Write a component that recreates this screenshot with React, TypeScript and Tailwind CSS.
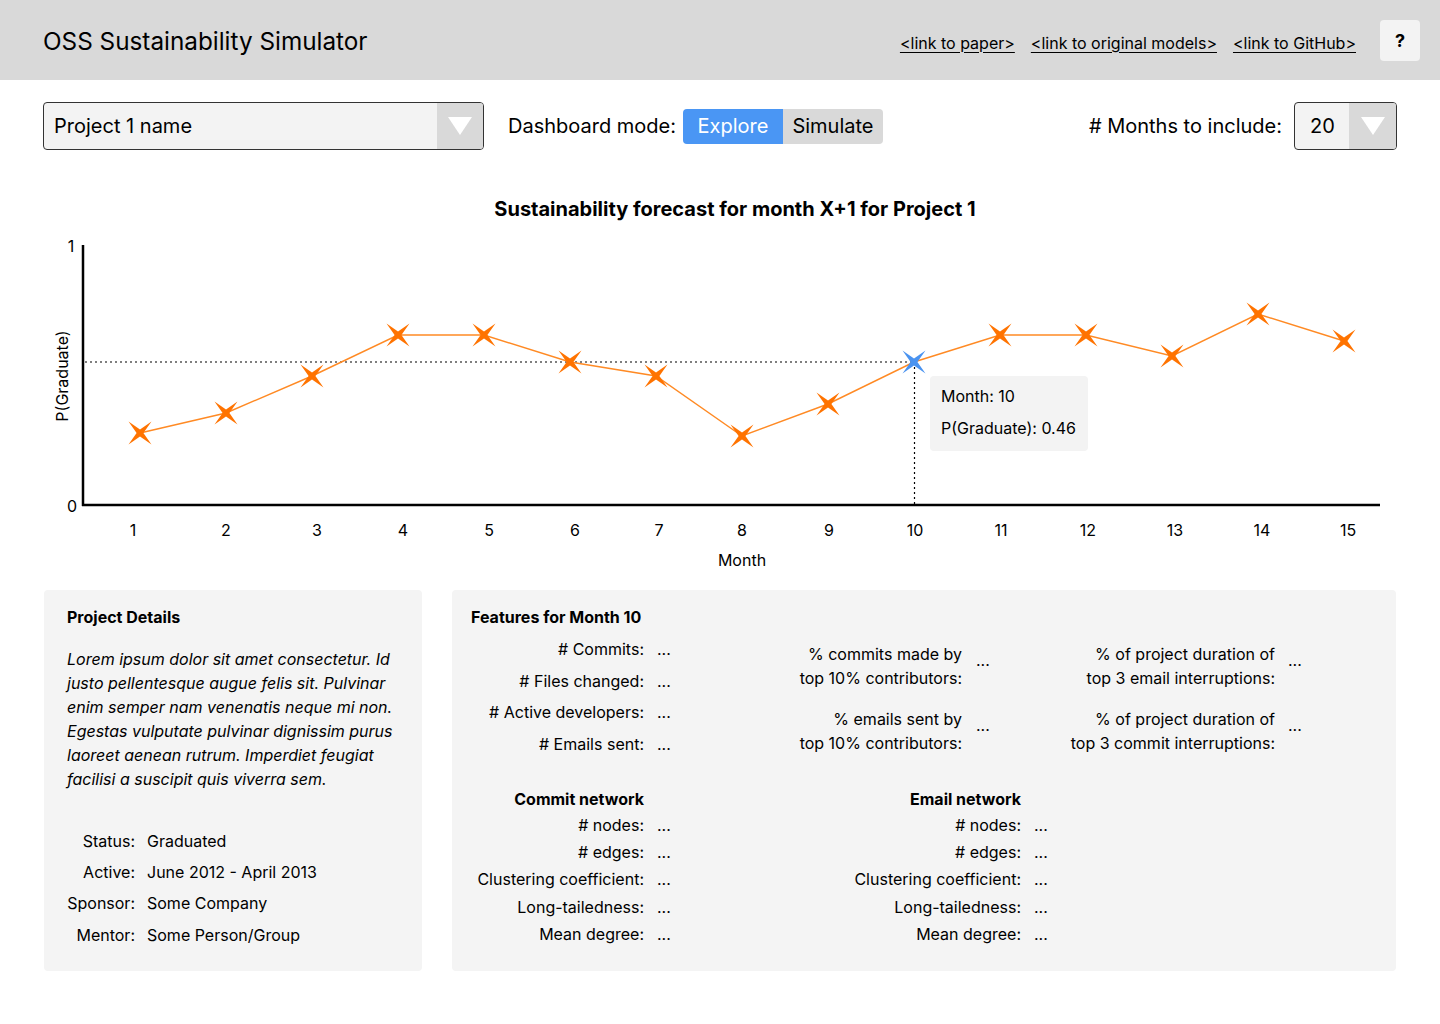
import React from "react";

const font = { fontFamily: "Inter, 'Noto Sans', sans-serif" };

const pts: [number, number][] = [
  [140, 263], [226, 243], [312, 206], [398, 165], [484, 165], [570, 192], [656, 206],
  [742, 266], [828, 234], [914, 192], [1000, 165], [1086, 165], [1172, 186], [1258, 144], [1344, 171],
];
const xLabels = [133, 226, 317, 403, 489, 575, 659, 742, 829, 915, 1001, 1088, 1175, 1262, 1348];

function Star({ x, y, color }: { x: number; y: number; color: string }) {
  const r = 11.5;
  const i = 3.4;
  const d = `M${x - r},${y - r} L${x},${y - i} L${x + r},${y - r} L${x + i},${y} L${x + r},${y + r} L${x},${y + i} L${x - r},${y + r} L${x - i},${y} Z`;
  return <path d={d} fill={color} />;
}

function Caret() {
  return (
    <svg width="24" height="18" viewBox="0 0 24 18">
      <path d="M0 0 L24 0 L12 18 Z" fill="#ffffff" />
    </svg>
  );
}

function Chart() {
  const line = pts.map((p) => p.join(",")).join(" ");
  return (
    <div className="relative mt-[20px] h-[420px] w-[1440px]">
      <svg width="1440" height="420" viewBox="0 0 1440 420" className="block" style={font}>
        <text x="735" y="39" textAnchor="middle" dominantBaseline="central" fontSize="20" fontWeight="700" fill="#000">
          Sustainability forecast for month X+1 for Project 1
        </text>
        <line x1="85" y1="192" x2="914" y2="192" stroke="#000" strokeWidth="1.2" strokeDasharray="2 3" />
        <line x1="914.5" y1="192" x2="914.5" y2="335" stroke="#000" strokeWidth="1.2" strokeDasharray="2 3" />
        <line x1="83" y1="75" x2="83" y2="336" stroke="#000" strokeWidth="2.5" />
        <line x1="82" y1="335" x2="1380" y2="335" stroke="#000" strokeWidth="2.5" />
        <text x="71" y="76" textAnchor="middle" dominantBaseline="central" fontSize="16" fill="#000">1</text>
        <text x="72" y="336" textAnchor="middle" dominantBaseline="central" fontSize="16" fill="#000">0</text>
        {xLabels.map((x, idx) => (
          <text key={idx} x={x} y="360" textAnchor="middle" dominantBaseline="central" fontSize="16" fill="#000">
            {idx + 1}
          </text>
        ))}
        <text x="742" y="390" textAnchor="middle" dominantBaseline="central" fontSize="16" fill="#000">Month</text>
        <text
          x="62"
          y="206"
          textAnchor="middle"
          dominantBaseline="central"
          fontSize="16"
          fill="#000"
          transform="rotate(-90 62 206)"
        >
          P(Graduate)
        </text>
        <polyline points={line} fill="none" stroke="#ff8a24" strokeWidth="1.4" />
        {pts.map(([x, y], idx) => (
          <Star key={idx} x={x} y={y} color={idx === 9 ? "#4a93f0" : "#ff7300"} />
        ))}
      </svg>
      <div
        className="absolute left-[930px] top-[206px] flex h-[75px] w-[158px] flex-col gap-[8px] rounded-[4px] bg-[#f3f3f3] pl-[11px] pt-[8px] text-[16px] leading-[24px] text-black"
        style={font}
      >
        <div>Month: 10</div>
        <div>P(Graduate): 0.46</div>
      </div>
    </div>
  );
}

export default function App() {
  const featCol1 = ["# Commits:", "# Files changed:", "# Active developers:", "# Emails sent:"];
  const net = ["# nodes:", "# edges:", "Clustering coefficient:", "Long-tailedness:", "Mean degree:"];
  return (
    <div className="min-h-[1024px] w-[1440px] bg-white text-black" style={font}>
      {/* header */}
      <div className="flex h-20 items-center bg-[#d9d9d9] pl-[43px] pr-[20px]">
        <div className="pt-[2px] text-[24.3px] leading-none">OSS Sustainability Simulator</div>
        <div className="ml-auto flex items-center gap-[16px] pt-[5px] text-[16px] underline underline-offset-[3px]">
          <span>&lt;link to paper&gt;</span>
          <span>&lt;link to original models&gt;</span>
          <span>&lt;link to GitHub&gt;</span>
        </div>
        <div className="ml-[24px] flex h-[41px] w-[40px] items-center justify-center rounded-[4px] bg-[#f3f3f3] text-[18px] font-bold">
          ?
        </div>
      </div>

      {/* controls */}
      <div className="mt-[22px] flex items-center px-[43px]">
        <div className="flex h-[48px] w-[441px] items-stretch overflow-hidden rounded-[4px] border border-[#333] bg-[#f3f3f3]">
          <div className="flex flex-1 items-center pl-[10px] text-[20px]">Project 1 name</div>
          <div className="flex w-[46px] items-center justify-center bg-[#d9d9d9]">
            <Caret />
          </div>
        </div>
        <div className="ml-[24px] text-[20px]">Dashboard mode:</div>
        <div className="ml-[7px] flex h-[35px] overflow-hidden rounded-[4px] text-[20px]">
          <div className="flex w-[100px] items-center justify-center bg-[#4a96f4] text-white">Explore</div>
          <div className="flex w-[100px] items-center justify-center bg-[#d9d9d9]">Simulate</div>
        </div>
        <div className="ml-auto text-[20px]"># Months to include:</div>
        <div className="ml-[12px] flex h-[48px] w-[103px] items-stretch overflow-hidden rounded-[4px] border border-[#333] bg-[#f3f3f3]">
          <div className="flex flex-1 items-center pl-[15px] text-[20px]">20</div>
          <div className="flex w-[47px] items-center justify-center bg-[#d9d9d9]">
            <Caret />
          </div>
        </div>
      </div>

      <Chart />

      {/* panels */}
      <div className="flex gap-[30px] pl-[44px]">
        <div className="h-[381px] w-[378px] rounded-[4px] bg-[#f4f4f4] px-[23px] pt-[15px]">
          <div className="text-[16px] font-bold leading-[24px]">Project Details</div>
          <p className="mt-[18px] w-[334px] text-[16px] italic leading-[24px]">
            Lorem ipsum dolor sit amet consectetur. Id justo pellentesque augue felis sit. Pulvinar enim semper nam
            venenatis neque mi non. Egestas vulputate pulvinar dignissim purus laoreet aenean rutrum. Imperdiet feugiat
            facilisi a suscipit quis viverra sem.
          </p>
          <div className="mt-[34px] grid grid-cols-[68px_1fr] gap-x-[12px] text-[16px]">
            {[
              ["Status:", "Graduated"],
              ["Active:", "June 2012 - April 2013"],
              ["Sponsor:", "Some Company"],
              ["Mentor:", "Some Person/Group"],
            ].map(([l, v]) => (
              <React.Fragment key={l}>
                <div className="flex h-[31.3px] items-center justify-end">{l}</div>
                <div className="flex h-[31.3px] items-center">{v}</div>
              </React.Fragment>
            ))}
          </div>
        </div>

        <div className="h-[381px] w-[944px] rounded-[4px] bg-[#f4f4f4] pl-[19px] pt-[15px] text-[16px]">
          <div className="font-bold leading-[24px]">Features for Month 10</div>
          <div className="mt-[4px] flex">
            <div className="flex flex-col">
              {featCol1.map((l) => (
                <div key={l} className="flex h-[31.7px] items-center">
                  <div className="w-[173px] text-right">{l}</div>
                  <div className="ml-[13px] w-[20px]">...</div>
                </div>
              ))}
            </div>
            <div className="flex flex-col">
              {[
                ["% commits made by", "top 10% contributors:"],
                ["% emails sent by", "top 10% contributors:"],
              ].map(([a, b], idx) => (
                <div key={idx} className={`flex h-[64px] items-center ${idx === 1 ? "pt-[4px]" : "pt-[2px]"}`}>
                  <div className="w-[285px] text-right leading-[24px]">
                    <div>{a}</div>
                    <div>{b}</div>
                  </div>
                  <div className="mb-[12px] ml-[14px] w-[20px]">...</div>
                </div>
              ))}
            </div>
            <div className="flex flex-col">
              {[
                ["% of project duration of", "top 3 email interruptions:"],
                ["% of project duration of", "top 3 commit interruptions:"],
              ].map(([a, b], idx) => (
                <div key={idx} className={`flex h-[64px] items-center ${idx === 1 ? "pt-[4px]" : "pt-[2px]"}`}>
                  <div className="w-[279px] text-right leading-[24px]">
                    <div>{a}</div>
                    <div>{b}</div>
                  </div>
                  <div className="mb-[12px] ml-[13px] w-[20px]">...</div>
                </div>
              ))}
            </div>
          </div>

          <div className="mt-[26px] flex">
            {["Commit network", "Email network"].map((title, bi) => (
              <div key={title} className={`flex flex-col ${bi === 1 ? "ml-[171px]" : ""}`}>
                <div className="w-[173px] text-right font-bold leading-[24px]">{title}</div>
                {net.map((l) => (
                  <div key={l} className="flex h-[27.3px] items-center">
                    <div className="w-[173px] text-right">{l}</div>
                    <div className="ml-[13px] w-[20px]">...</div>
                  </div>
                ))}
              </div>
            ))}
          </div>
        </div>
      </div>
    </div>
  );
}
